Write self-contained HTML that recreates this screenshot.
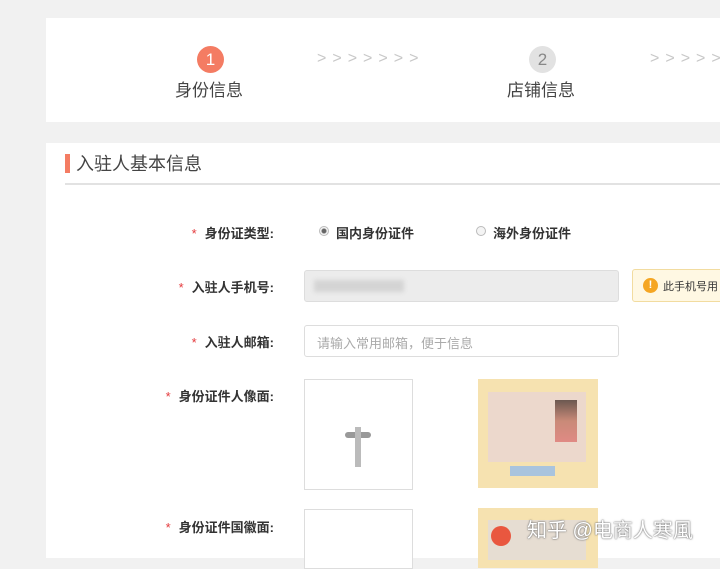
<!DOCTYPE html>
<html><head><meta charset="utf-8"><style>
*{margin:0;padding:0;box-sizing:border-box}
body{width:720px;height:558px;background:#f1f1f1;position:relative;overflow:hidden;font-family:"Liberation Sans","Noto Sans CJK SC",sans-serif;color:#333}
.a{position:absolute}
.p{background:#fff}
.lbl{position:absolute;right:446px;font-size:13px;font-weight:bold;color:#333;white-space:nowrap}
.lbl b{color:#e4393c;margin-right:8px;font-weight:normal}
.arr{color:#c8c8c8;font-size:16px;letter-spacing:6px}
.rad{width:10px;height:10px;border:1px solid #bbb;border-radius:50%;background:#f4f4f4}
</style></head><body>
<div class="a p" style="left:46px;top:18px;width:674px;height:104px"></div>
<div class="a" style="left:197px;top:46px;width:27px;height:27px;border-radius:50%;background:#f47c63;color:#fff;font-size:17px;text-align:center;line-height:27px">1</div>
<div class="a" style="left:175px;top:76px;font-size:17px;color:#444">身份信息</div>
<div class="a arr" style="left:317px;top:50px">&gt;&gt;&gt;&gt;&gt;&gt;&gt;</div>
<div class="a" style="left:529px;top:46px;width:27px;height:27px;border-radius:50%;background:#e2e2e2;color:#888;font-size:17px;text-align:center;line-height:27px">2</div>
<div class="a" style="left:507px;top:76px;font-size:17px;color:#444">店铺信息</div>
<div class="a arr" style="left:650px;top:50px">&gt;&gt;&gt;&gt;&gt;</div>

<div class="a p" style="left:46px;top:143px;width:674px;height:415px"></div>
<div class="a" style="left:65px;top:154px;width:5px;height:19px;background:#f47c63"></div>
<div class="a" style="left:76px;top:150px;font-size:18px;color:#444">入驻人基本信息</div>
<div class="a" style="left:65px;top:183px;width:655px;height:2px;background:#e2e2e2"></div>

<div class="lbl" style="top:223px"><b>*</b>身份证类型:</div>
<div class="a rad" style="left:319px;top:226px;background:radial-gradient(#666 2px,#f4f4f4 3px)"></div>
<div class="a" style="left:336px;top:223px;font-size:13px;font-weight:bold">国内身份证件</div>
<div class="a rad" style="left:476px;top:226px"></div>
<div class="a" style="left:493px;top:223px;font-size:13px;font-weight:bold">海外身份证件</div>

<div class="lbl" style="top:277px"><b>*</b>入驻人手机号:</div>
<div class="a" style="left:304px;top:270px;width:315px;height:32px;background:#ececec;border:1px solid #ddd;border-radius:3px"></div>
<div class="a" style="left:314px;top:280px;width:90px;height:12px;background:#d4d4d4;filter:blur(2px)"></div>
<div class="a" style="left:632px;top:269px;width:100px;height:33px;background:#fff8e3;border:1px solid #f2dca0;border-radius:3px"></div>
<div class="a" style="left:643px;top:278px;width:15px;height:15px;border-radius:50%;background:#f5a623;color:#fff;font-size:11px;font-weight:bold;text-align:center;line-height:15px">!</div>
<div class="a" style="left:663px;top:278px;font-size:11px;color:#333">此手机号用</div>

<div class="lbl" style="top:332px"><b>*</b>入驻人邮箱:</div>
<div class="a" style="left:304px;top:325px;width:315px;height:32px;background:#fff;border:1px solid #ddd;border-radius:3px"></div>
<div class="a" style="left:317px;top:333px;font-size:13px;color:#aaa">请输入常用邮箱，便于信息</div>

<div class="lbl" style="top:386px"><b>*</b>身份证件人像面:</div>
<div class="a" style="left:304px;top:379px;width:109px;height:111px;border:1px solid #ddd;background:#fff"></div>
<div class="a" style="left:345px;top:432px;width:26px;height:6px;background:#999;border-radius:3px"></div>
<div class="a" style="left:355px;top:427px;width:6px;height:40px;background:#bbb"></div>
<div class="a" style="left:478px;top:379px;width:120px;height:109px;background:#f6e2b0"></div>
<div class="a" style="left:488px;top:392px;width:98px;height:70px;background:#ecd8cc"></div>
<div class="a" style="left:555px;top:400px;width:22px;height:42px;background:linear-gradient(#6b5850,#c98a78,#e08a84)"></div>
<div class="a" style="left:510px;top:466px;width:45px;height:10px;background:#a9c4de"></div>

<div class="lbl" style="top:517px"><b>*</b>身份证件国徽面:</div>
<div class="a" style="left:304px;top:509px;width:109px;height:60px;border:1px solid #ddd;background:#fff"></div>
<div class="a" style="left:478px;top:508px;width:120px;height:60px;background:#f6e2b0"></div>
<div class="a" style="left:488px;top:520px;width:98px;height:40px;background:#e6ddd2"></div>
<div class="a" style="left:491px;top:526px;width:20px;height:20px;border-radius:50%;background:#e9573f"></div>
<div class="a" style="left:527px;top:514px;font-size:20px;color:#fff;text-shadow:0 0 2px #777,0 0 1px #555">知乎 @电商人寒風</div>
</body></html>
